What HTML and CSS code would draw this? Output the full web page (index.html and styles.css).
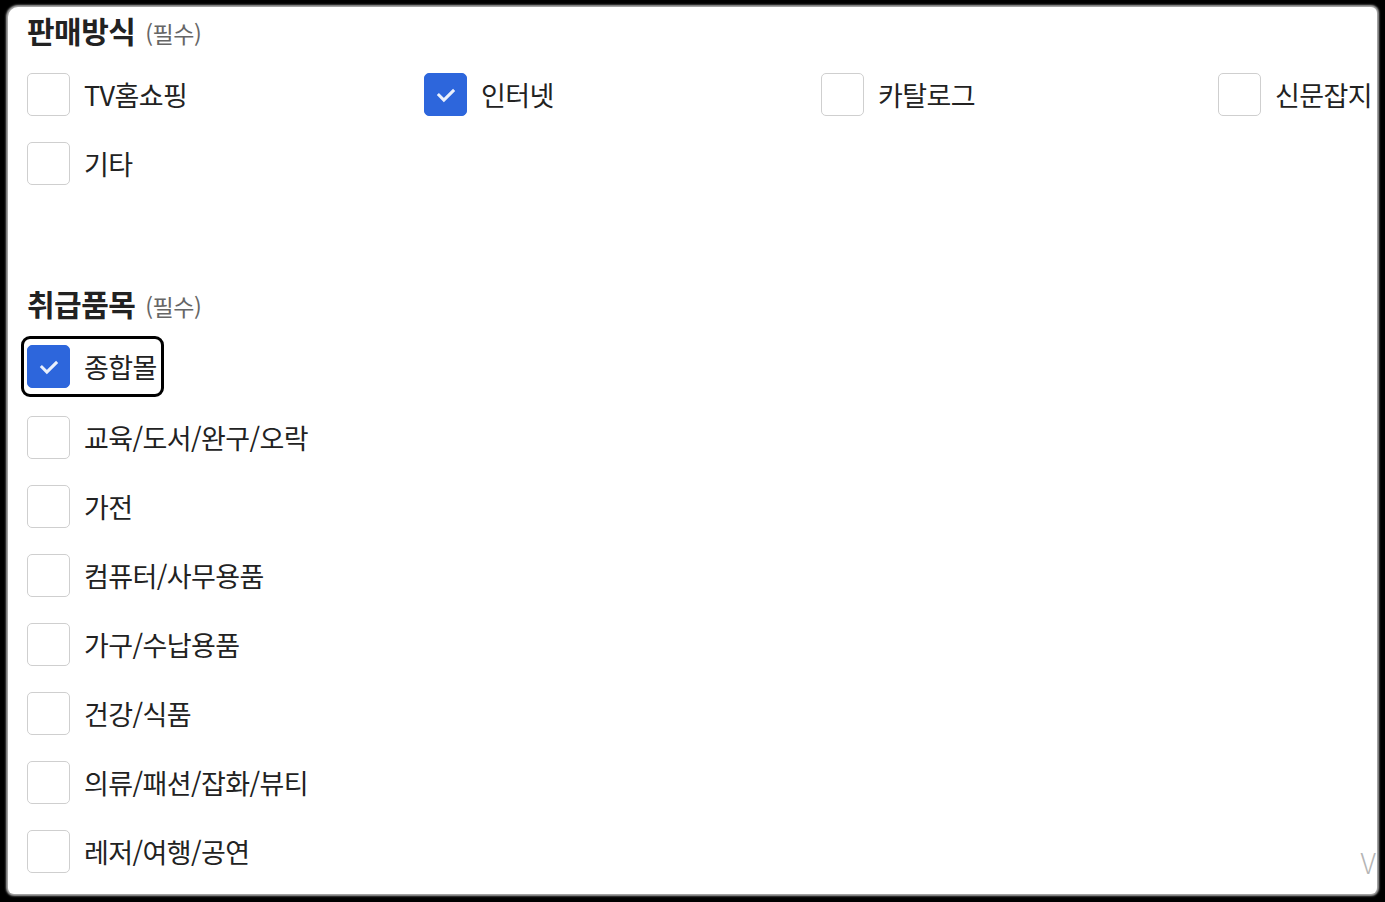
FILE: index.html
```html
<!DOCTYPE html>
<html lang="ko">
<head>
    <meta charset="UTF-8">
    <meta name="viewport" content="width=device-width, initial-scale=1.0">
    <title>판매방식 / 취급품목</title>

    <link rel="stylesheet" href="styles.css">
</head>
<body>

    <div class="card">
        <!-- 판매방식 -->
        <section class="field">
            <h2>판매방식 <span class="required">(필수)</span></h2>
            <div class="options options-grid">
                <label class="option"><input type="checkbox"><span class="box"></span><span class="text">TV홈쇼핑</span></label>
                <label class="option"><input type="checkbox" checked><span class="box"></span><span class="text">인터넷</span></label>
                <label class="option"><input type="checkbox"><span class="box"></span><span class="text">카탈로그</span></label>
                <label class="option"><input type="checkbox"><span class="box"></span><span class="text">신문잡지</span></label>
                <label class="option"><input type="checkbox"><span class="box"></span><span class="text">기타</span></label>
            </div>
        </section>

        <!-- 취급품목 -->
        <section class="field field-items">
            <h2>취급품목 <span class="required">(필수)</span></h2>
            <div class="options options-list">
                <label class="option focused"><input type="checkbox" checked><span class="box"></span><span class="text">종합몰</span></label>
                <label class="option"><input type="checkbox"><span class="box"></span><span class="text">교육/도서/완구/오락</span></label>
                <label class="option"><input type="checkbox"><span class="box"></span><span class="text">가전</span></label>
                <label class="option"><input type="checkbox"><span class="box"></span><span class="text">컴퓨터/사무용품</span></label>
                <label class="option"><input type="checkbox"><span class="box"></span><span class="text">가구/수납용품</span></label>
                <label class="option"><input type="checkbox"><span class="box"></span><span class="text">건강/식품</span></label>
                <label class="option"><input type="checkbox"><span class="box"></span><span class="text">의류/패션/잡화/뷰티</span></label>
                <label class="option"><input type="checkbox"><span class="box"></span><span class="text">레저/여행/공연</span></label>
            </div>
        </section>

        <span class="corner-mark">V</span>
    </div>

</body>
</html>
```

FILE: styles.css
```css
/* Basic reset */
* {
    margin: 0;
    padding: 0;
    box-sizing: border-box;
}

body {
    font-family: "Noto Sans CJK KR", "Noto Sans", sans-serif;
    background-color: #000;
    padding: 7px 8px 8px 8px;
    height: 100vh;
}

.card {
    position: relative;
    background-color: #fff;
    height: 100%;
    border-radius: 10px 6px 6px 6px;
    box-shadow: 0 0 2px 2px rgba(190, 190, 190, 0.9);
    overflow: hidden;
    padding: 6px 0 0 19px;
}

h2 {
    font-size: 30px;
    font-weight: 700;
    line-height: 35px;
    letter-spacing: -0.5px;
    color: #222;
}

h2 .required {
    font-size: 23px;
    font-weight: 400;
    letter-spacing: -0.5px;
    color: #666;
    margin-left: 2px;
}

.options {
    margin-top: 22px;
}

.options-grid {
    display: grid;
    grid-template-columns: repeat(4, 397px);
    row-gap: 26px;
}

.options-list {
    display: flex;
    flex-direction: column;
    align-items: flex-start;
    row-gap: 26px;
    margin-top: 21px;
}

.field-items {
    margin-top: 101px;
}

.option {
    display: inline-flex;
    align-items: center;
    gap: 14px;
    height: 43px;
    border-radius: 3px;
    cursor: pointer;
}

.option input {
    display: none;
}

.option .box {
    width: 43px;
    height: 43px;
    border: 1.5px solid #cfcfcf;
    border-radius: 5px;
    background-color: #fff;
    display: flex;
    align-items: center;
    justify-content: center;
}

/* checked state: blue box with a white tick */
.option input:checked + .box {
    background-color: #2d66dc;
    border-color: #2d66dc;
}

.option input:checked + .box::after {
    content: "";
    width: 13px;
    height: 7px;
    border-left: 3px solid rgba(255, 255, 255, 0.9);
    border-bottom: 3px solid rgba(255, 255, 255, 0.9);
    transform: translateY(-2px) rotate(-45deg);
}

.option .text {
    font-size: 27px;
    letter-spacing: -0.6px;
    color: #222;
    line-height: 1;
}

/* keyboard focus ring, a bit taller than the row */
.option.focused {
    height: 49px;
    margin: -3px 0 -1px;
    outline: 3px solid #000;
    outline-offset: 3px;
    padding-right: 1px;
}

.corner-mark {
    position: absolute;
    right: 1px;
    bottom: 12px;
    font-size: 28px;
    font-weight: 300;
    color: #b5b5b5;
}
```
